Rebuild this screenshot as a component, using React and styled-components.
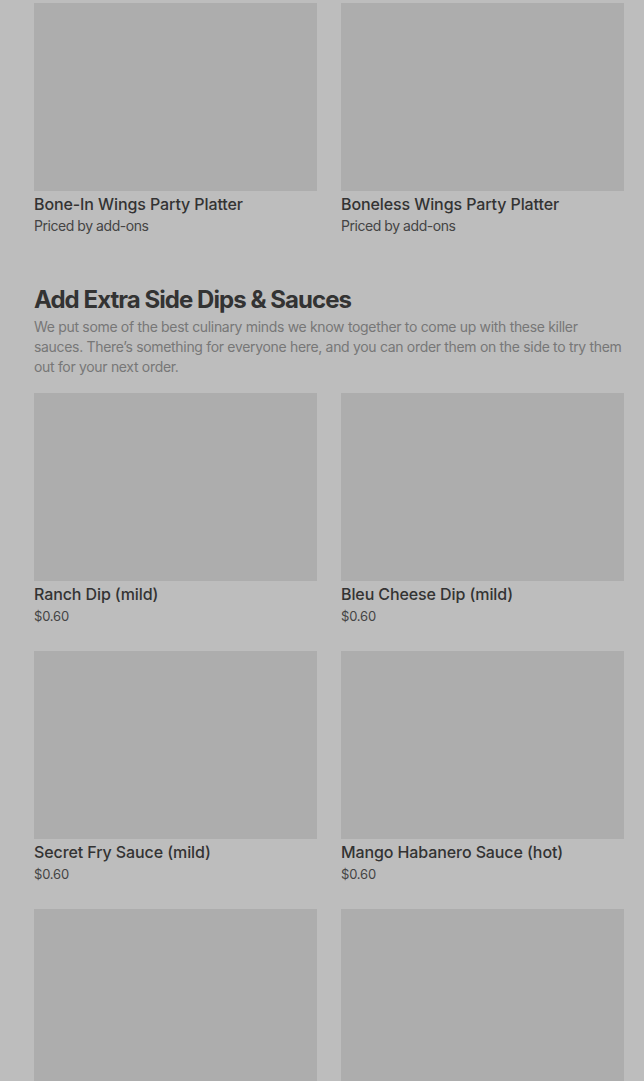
import React from 'react'
import styled, { createGlobalStyle } from 'styled-components'

const GlobalStyle = createGlobalStyle`
  html, body {
    margin: 0;
    padding: 0;
    background: #bdbdbd;
    font-family: Inter, "Noto Sans", sans-serif;
    overflow: hidden;
  }
`

const Page = styled.div`
  padding: 3px 20px 0 34px;
  height: 1081px;
  box-sizing: border-box;
  overflow: hidden;
`

const Grid = styled.div`
  display: grid;
  grid-template-columns: 283px 283px;
  column-gap: 24px;
  row-gap: 25px;
`

const Card = styled.div`
  display: flex;
  flex-direction: column;
`

const Pic = styled.div`
  height: 188px;
  background: #adadad;
`

const Title = styled.div`
  margin-top: 1px;
  font-size: 16px;
  line-height: 24px;
  font-weight: 500;
  color: #333333;
  letter-spacing: -0.1px;
`

const Sub = styled.div`
  font-size: ${(p) => (p.$price ? '13px' : '14px')};
  line-height: 20px;
  color: #444444;
  letter-spacing: ${(p) => (p.$price ? '-0.2px' : '-0.45px')};
`

const Section = styled.section`
  margin-top: 48px;
`

const Heading = styled.h2`
  margin: 0;
  font-size: 24px;
  line-height: 32px;
  font-weight: 700;
  color: #333333;
  letter-spacing: -0.95px;
`

const Description = styled.p`
  margin: 1px 0 16px;
  font-size: 14px;
  line-height: 20px;
  color: #777777;
  letter-spacing: -0.32px;
`

const platters = [
  { name: 'Bone-In Wings Party Platter', sub: 'Priced by add-ons' },
  { name: 'Boneless Wings Party Platter', sub: 'Priced by add-ons' },
]

const sauces = [
  { name: 'Ranch Dip (mild)', sub: '$0.60' },
  { name: 'Bleu Cheese Dip (mild)', sub: '$0.60' },
  { name: 'Secret Fry Sauce (mild)', sub: '$0.60' },
  { name: 'Mango Habanero Sauce (hot)', sub: '$0.60' },
  { name: '', sub: '' },
  { name: '', sub: '' },
]

function Item({ name, sub, price }) {
  return (
    <Card>
      <Pic />
      <Title>{name}</Title>
      <Sub $price={price}>{sub}</Sub>
    </Card>
  )
}

export default function App() {
  return (
    <Page>
      <GlobalStyle />
      <Grid>
        {platters.map((p) => (
          <Item key={p.name} {...p} />
        ))}
      </Grid>
      <Section>
        <Heading>Add Extra Side Dips &amp; Sauces</Heading>
        <Description>
          We put some of the best culinary minds we know together to come up with these killer
          sauces. There’s something for everyone here, and you can order them on the side to try
          them out for your next order.
        </Description>
        <Grid>
          {sauces.map((s, i) => (
            <Item key={i} {...s} price />
          ))}
        </Grid>
      </Section>
    </Page>
  )
}
